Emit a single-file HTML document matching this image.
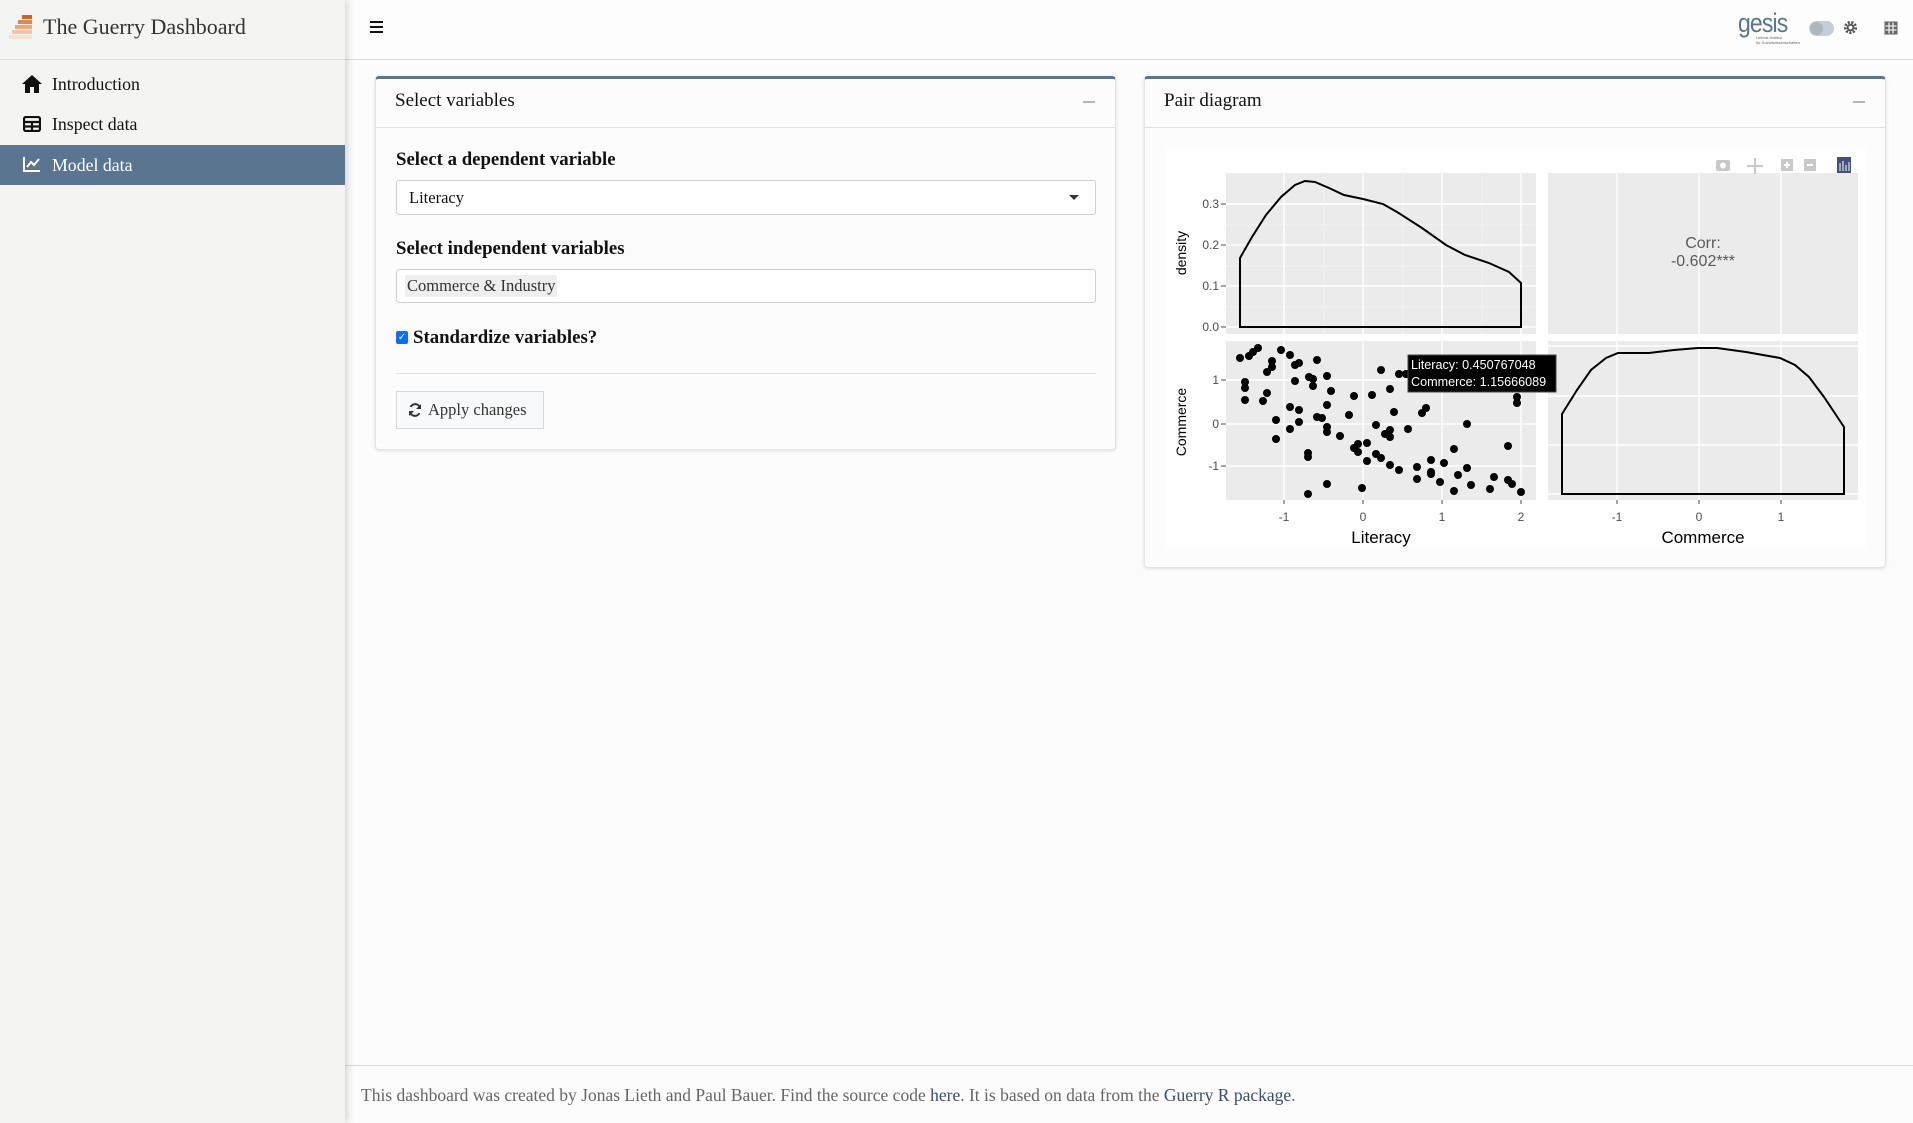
<!DOCTYPE html>
<html><head><meta charset="utf-8"><style>
*{box-sizing:border-box;margin:0;padding:0}
body{width:1913px;height:1123px;overflow:hidden;background:#fcfcfc;font-family:"Liberation Serif",serif;color:#111;position:relative}
.abs{position:absolute}
#side{left:0;top:0;width:345px;height:1123px;background:#f4f4f2;box-shadow:2px 0 8px rgba(0,0,0,.18);z-index:2}
#side .brand{height:60px;border-bottom:1px solid #dcdde2;position:relative}
.nav{position:absolute;left:0;width:345px;height:40px;font-size:17.8px;line-height:40px;padding-left:52px}
.card{position:absolute;background:#fcfcfc;border:1px solid #e3e3e3;border-top:3px solid #5a7590;border-radius:4px;box-shadow:0 1px 3px rgba(0,0,0,.12)}
.card .hd{height:49px;border-bottom:1px solid #e0e0e0;font-size:19px;line-height:44px;padding-left:19px}
.card .mn{position:absolute;right:20px;top:22px;width:12px;height:2px;background:#b5b5b5}
.lbl{position:absolute;left:20px;font-weight:bold;font-size:18.8px}
.box{position:absolute;left:20px;width:700px;background:#fff;border:1px solid #cfcfcf;border-radius:3px;font-size:16.5px}
</style></head><body>
<div id="side" class="abs">
 <div class="brand">
  <svg class="abs" style="left:8px;top:15px" width="28" height="28" viewBox="0 0 28 28">
   <rect x="14" y="0" width="10" height="4" fill="#d0641e"/><rect x="10" y="5" width="14" height="4" fill="#e08a4c"/><rect x="7" y="10" width="17" height="4" fill="#eba97a"/><rect x="4" y="15" width="20" height="4" fill="#f2c6a5"/><rect x="1" y="20" width="23" height="4" fill="#f8e0cf"/>
  </svg>
  <div class="abs" style="left:43px;top:14px;font-size:22px;color:#333">The Guerry Dashboard</div>
 </div>
 <div class="nav" style="top:64px"><svg class="abs" style="left:22px;top:11px" width="20" height="18" viewBox="0 0 20 18"><path d="M10 0L0 9h3v9h5v-6h4v6h5V9h3z" fill="#111"/></svg>Introduction</div>
 <div class="nav" style="top:104px"><svg class="abs" style="left:23px;top:12px" width="18" height="16" viewBox="0 0 18 16"><rect x="1" y="1" width="16" height="14" rx="2" fill="none" stroke="#111" stroke-width="2.2"/><path d="M1 6h16M9 6v9M1 10.5h16" stroke="#111" stroke-width="2.2"/></svg>Inspect data</div>
 <div class="nav" style="top:145px;background:#5a7590;color:#fff"><svg class="abs" style="left:23px;top:11px" width="18" height="16" viewBox="0 0 18 16"><path d="M1 1v14h16" fill="none" stroke="#fff" stroke-width="2"/><path d="M4 11l4-5 3 3 5-6" fill="none" stroke="#fff" stroke-width="2"/></svg>Model data</div>
</div>
<div class="abs" style="left:345px;top:0;width:1568px;height:60px;background:#fdfdfd;border-bottom:1px solid #dcdde2"></div>
<div class="abs" style="left:370px;top:21px;width:13px;height:2px;background:#111;box-shadow:0 5px 0 #111,0 10px 0 #111"></div>
<div class="abs" style="left:1738px;top:8px;font-family:'Liberation Sans',sans-serif;font-size:27px;color:#5a7590;letter-spacing:-1px;transform:scaleX(.85);transform-origin:left">gesis</div>
<div class="abs" style="left:1756px;top:35px;font-size:4px;color:#666;line-height:5px;font-family:'Liberation Sans',sans-serif">Leibniz-Institut<br>für Sozialwissenschaften</div>
<div class="abs" style="left:1809px;top:21px;width:25px;height:15px;border-radius:8px;background:#c5cdd6"><div style="position:absolute;left:1px;top:1px;width:13px;height:13px;border-radius:50%;background:#aeb6bf"></div></div>
<svg class="abs" style="left:1843px;top:20px" width="15" height="15" viewBox="0 0 16 16"><circle cx="8" cy="8" r="5.5" fill="none" stroke="#555" stroke-width="3" stroke-dasharray="2.2 1.6"/><circle cx="8" cy="8" r="3" fill="none" stroke="#555" stroke-width="2"/></svg>
<svg class="abs" style="left:1884px;top:21px" width="14" height="14" viewBox="0 0 14 14"><rect x="0.5" y="0.5" width="13" height="13" fill="#666"/><path d="M1.5 5h11M1.5 9h11M5 1.5v11M9 1.5v11" stroke="#eee" stroke-width="1.3"/></svg>

<div class="card" style="left:375px;top:76px;width:741px;height:374px">
 <div class="hd">Select variables</div><div class="mn"></div>
 <div class="lbl" style="top:70px">Select a dependent variable</div>
 <div class="box" style="top:101px;height:35px;line-height:33px;padding-left:12px">Literacy<div class="abs" style="right:16px;top:14px;border-left:5px solid transparent;border-right:5px solid transparent;border-top:5px solid #333"></div></div>
 <div class="lbl" style="top:159px">Select independent variables</div>
 <div class="box" style="top:190px;height:34px"><div class="abs" style="left:8px;top:5px;height:22px;line-height:22px;padding:0 2px;background:#eee;border-radius:2px;color:#333">Commerce &amp; Industry</div></div>
 <div class="abs" style="left:20px;top:252px;width:12px;height:13px;background:#0d6efd;border-radius:2px;color:#fff;font-size:10px;line-height:13px;text-align:center;font-family:'Liberation Sans',sans-serif">✓</div>
 <div class="lbl" style="left:37px;top:248px">Standardize variables?</div>
 <div class="abs" style="left:20px;top:294px;width:700px;height:1px;background:#e0e0e0"></div>
 <div class="abs" style="left:20px;top:312px;width:148px;height:38px;border:1px solid #d8d8d8;background:#f8f9fa;font-size:16.5px;line-height:36px;padding-left:31px;color:#333">Apply changes
  <svg class="abs" style="left:11px;top:11px" width="14" height="14" viewBox="0 0 14 14"><path d="M12 5A5 5 0 0 0 2.6 4M2 9a5 5 0 0 0 9.4 1" fill="none" stroke="#333" stroke-width="2"/><path d="M13 1v5H8zM1 13V8h5z" fill="#333"/></svg></div>
</div>

<div class="card" style="left:1144px;top:76px;width:742px;height:492px">
 <div class="hd">Pair diagram</div><div class="mn"></div>
</div>

<svg class="abs" style="left:0;top:0" width="1913" height="1123" font-family="Liberation Sans,sans-serif">
 <rect x="1165" y="146" width="702" height="404" fill="#fefefe"/>
 <g fill="#ebebeb"><rect x="1226" y="173" width="310" height="161"/><rect x="1548" y="173" width="310" height="161"/><rect x="1226" y="341" width="310" height="159"/><rect x="1548" y="341" width="310" height="159"/></g>
 <g stroke="#fff" stroke-width="1.4">
  <path d="M1284 173V334M1363 173V334M1442 173V334M1521 173V334M1226 204H1536M1226 245H1536M1226 286H1536M1226 327H1536"/>
  <path d="M1284 341V500M1363 341V500M1442 341V500M1521 341V500M1226 380H1536M1226 424H1536M1226 466H1536"/>
  <path d="M1617 173V334M1699 173V334M1781 173V334"/>
  <path d="M1617 341V500M1699 341V500M1781 341V500M1548 346H1858M1548 396H1858M1548 445H1858M1548 494H1858"/>
 </g>
 <g stroke="#ffffff" stroke-width=".6" opacity=".6"><path d="M1226 225H1536M1226 266H1536M1226 307H1536M1324 173V334M1403 173V334M1482 173V334"/></g>
 <path d="M1240 327L1240 258L1252 237L1266 215L1281 197L1295 185L1305 181L1315 182L1329 188L1344 195L1363 199L1383 204L1397 212L1422 228L1446 245L1465 255L1489 263L1509 272L1521 283L1521 327Z" fill="none" stroke="#000" stroke-width="2"/>
 <path d="M1562 494L1562 414L1577 390L1591 370L1606 358L1618 353L1649 353L1674 350L1698 348L1717 348L1746 352L1780 358L1795 365L1809 377L1824 397L1844 427L1844 494Z" fill="none" stroke="#000" stroke-width="2"/>
 <g fill="#000">
  <circle cx="1240" cy="358" r="4"/><circle cx="1249" cy="356" r="4"/><circle cx="1253" cy="352" r="4"/><circle cx="1258" cy="348" r="4"/><circle cx="1281" cy="350" r="4"/><circle cx="1290" cy="355" r="4"/><circle cx="1272" cy="361" r="4"/><circle cx="1272" cy="367" r="4"/><circle cx="1267" cy="372" r="4"/><circle cx="1295" cy="365" r="4"/><circle cx="1299" cy="363" r="4"/><circle cx="1317" cy="360" r="4"/><circle cx="1245" cy="382" r="4"/><circle cx="1245" cy="388" r="4"/><circle cx="1245" cy="400" r="4"/><circle cx="1267" cy="393" r="4"/><circle cx="1263" cy="401" r="4"/><circle cx="1295" cy="381" r="4"/><circle cx="1309" cy="377" r="4"/><circle cx="1313" cy="379" r="4"/><circle cx="1313" cy="386" r="4"/><circle cx="1327" cy="376" r="4"/><circle cx="1331" cy="391" r="4"/><circle cx="1290" cy="407" r="4"/><circle cx="1299" cy="410" r="4"/><circle cx="1327" cy="405" r="4"/><circle cx="1317" cy="417" r="4"/><circle cx="1322" cy="418" r="4"/><circle cx="1276" cy="420" r="4"/><circle cx="1299" cy="422" r="4"/><circle cx="1290" cy="429" r="4"/><circle cx="1327" cy="427" r="4"/><circle cx="1327" cy="432" r="4"/><circle cx="1340" cy="436" r="4"/><circle cx="1276" cy="439" r="4"/><circle cx="1349" cy="415" r="4"/><circle cx="1354" cy="396" r="4"/><circle cx="1372" cy="395" r="4"/><circle cx="1381" cy="370" r="4"/><circle cx="1390" cy="389" r="4"/><circle cx="1399" cy="374" r="4"/><circle cx="1394" cy="412" r="4"/><circle cx="1376" cy="425" r="4"/><circle cx="1390" cy="430" r="4"/><circle cx="1385" cy="434" r="4"/><circle cx="1390" cy="437" r="4"/><circle cx="1408" cy="429" r="4"/><circle cx="1422" cy="413" r="4"/><circle cx="1426" cy="408" r="4"/><circle cx="1467" cy="424" r="4"/><circle cx="1354" cy="448" r="4"/><circle cx="1358" cy="444" r="4"/><circle cx="1358" cy="452" r="4"/><circle cx="1367" cy="443" r="4"/><circle cx="1376" cy="454" r="4"/><circle cx="1381" cy="458" r="4"/><circle cx="1367" cy="461" r="4"/><circle cx="1390" cy="465" r="4"/><circle cx="1399" cy="470" r="4"/><circle cx="1417" cy="467" r="4"/><circle cx="1431" cy="460" r="4"/><circle cx="1431" cy="472" r="4"/><circle cx="1431" cy="474" r="4"/><circle cx="1444" cy="463" r="4"/><circle cx="1454" cy="449" r="4"/><circle cx="1417" cy="479" r="4"/><circle cx="1440" cy="482" r="4"/><circle cx="1454" cy="491" r="4"/><circle cx="1458" cy="475" r="4"/><circle cx="1467" cy="468" r="4"/><circle cx="1471" cy="485" r="4"/><circle cx="1490" cy="489" r="4"/><circle cx="1494" cy="477" r="4"/><circle cx="1508" cy="446" r="4"/><circle cx="1508" cy="480" r="4"/><circle cx="1512" cy="484" r="4"/><circle cx="1521" cy="492" r="4"/><circle cx="1517" cy="397" r="4"/><circle cx="1517" cy="403" r="4"/><circle cx="1327" cy="484" r="4"/><circle cx="1308" cy="453" r="4"/><circle cx="1308" cy="457" r="4"/><circle cx="1308" cy="494" r="4"/><circle cx="1362" cy="488" r="4"/><circle cx="1406" cy="374" r="4"/>
 </g>
 <g font-size="12" fill="#4d4d4d" text-anchor="end">
  <text x="1219" y="208">0.3</text><text x="1219" y="249">0.2</text><text x="1219" y="290">0.1</text><text x="1219" y="331">0.0</text>
  <text x="1219" y="384">1</text><text x="1219" y="428">0</text><text x="1219" y="470">-1</text>
 </g>
 <g stroke="#4d4d4d"><path d="M1221 204h5M1221 245h5M1221 286h5M1221 327h5M1221 380h5M1221 424h5M1221 466h5M1284 500v4M1363 500v4M1442 500v4M1521 500v4M1617 500v4M1699 500v4M1781 500v4"/></g>
 <g font-size="12" fill="#4d4d4d" text-anchor="middle">
  <text x="1284" y="521">-1</text><text x="1363" y="521">0</text><text x="1442" y="521">1</text><text x="1521" y="521">2</text>
  <text x="1617" y="521">-1</text><text x="1699" y="521">0</text><text x="1781" y="521">1</text>
 </g>
 <g font-size="17" fill="#000" text-anchor="middle"><text x="1381" y="543">Literacy</text><text x="1703" y="543">Commerce</text></g>
 <g font-size="14" fill="#000" text-anchor="middle"><text transform="translate(1186,253) rotate(-90)">density</text><text transform="translate(1186,422) rotate(-90)">Commerce</text></g>
 <g font-size="16" fill="#595959" text-anchor="middle"><text x="1703" y="248">Corr:</text><text x="1703" y="266">-0.602***</text></g>
 <path d="M1402 374l7-5v10z" fill="#000"/>
 <rect x="1408" y="355" width="148" height="37" fill="#000" stroke="#444"/>
 <g font-size="12.6" fill="#fff"><text x="1411" y="369">Literacy:  0.450767048</text><text x="1411" y="386">Commerce:  1.15666089</text></g>
 <g fill="#c8c8c8"><rect x="1716" y="160" width="14" height="11" rx="2"/><circle cx="1723" cy="165.5" r="3" fill="#fff"/><path d="M1755 158v16M1747 166h16" stroke="#c8c8c8" stroke-width="2"/><rect x="1781" y="159" width="12" height="12"/><rect x="1804" y="159" width="12" height="12"/></g>
 <path d="M1784 165h6M1787 162v6M1807 165h6" stroke="#fff" stroke-width="2"/>
 <rect x="1837" y="157" width="14" height="16" fill="#44517a"/><path d="M1840 163v8M1843 161v10M1846 165v6M1849 162v9" stroke="#fff" stroke-width="1"/>
</svg>

<div class="abs" style="left:345px;top:1065px;width:1568px;height:1px;background:#dcdde2"></div>
<div class="abs" style="left:361px;top:1085px;font-size:17.5px;color:#666;white-space:nowrap">This dashboard was created by Jonas Lieth and Paul Bauer. Find the source code <span style="color:#3a4f66">here</span>. It is based on data from the <span style="color:#3a4f66">Guerry R package</span>.</div>
</body></html>
